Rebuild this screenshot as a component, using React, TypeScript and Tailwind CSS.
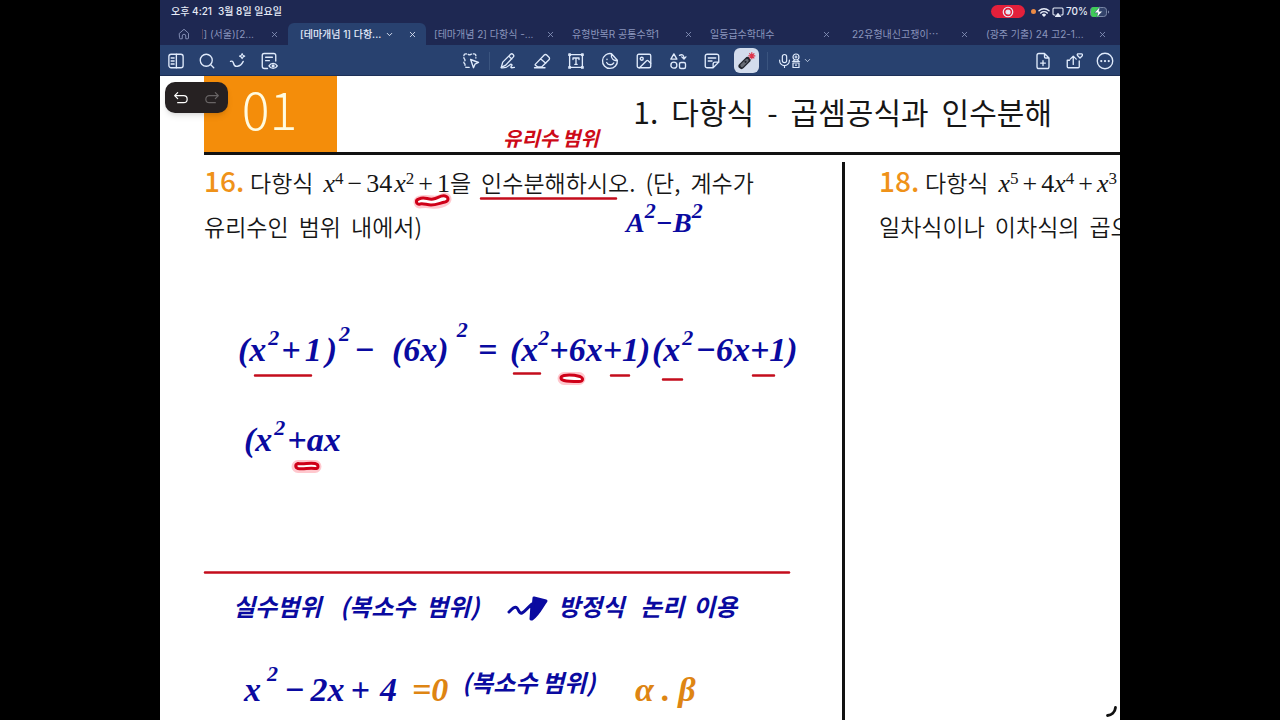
import React from "react";
import { Search, X, ChevronDown, Image as ImageIcon } from "lucide-react";

type IconProps = { children: React.ReactNode; className?: string; width?: number };

function Icon({ children, className = "size-[18px]", width = 1.8 }: IconProps) {
  return (
    <svg viewBox="0 0 24 24" className={className} fill="none" stroke="currentColor" strokeWidth={width} strokeLinecap="round" strokeLinejoin="round" aria-hidden="true">
      {children}
    </svg>
  );
}

function ToolButton({ label, children, className = "w-[34px]" }: { label: string; children: React.ReactNode; className?: string }) {
  return (
    <button type="button" aria-label={label} className={`flex h-[26px] items-center justify-center ${className}`}>
      {children}
    </button>
  );
}

function StatusBar() {
  return (
    <div className="flex h-[23px] items-center justify-between pr-[10px] pl-[11px] text-[10px] font-medium text-[#e6ebf7]">
      <div className="flex gap-1.5">
        <span>오후 4:21</span>
        <span>3월 8일 일요일</span>
      </div>
      <div className="flex items-center gap-0.5">
        <span className="mr-1 flex h-[13px] w-[34px] items-center justify-center rounded-full bg-[#e3203b]">
          <Icon className="size-3" width={2.4}>
            <circle cx="12" cy="12" r="9.5" />
            <circle cx="12" cy="12" r="4" fill="currentColor" />
          </Icon>
        </span>
        <span className="size-[5px] rounded-full bg-[#ec8a45]" />
        <Icon className="size-3" width={3}>
          <path d="M2 9.5a15 15 0 0 1 20 0M5.5 14a9.5 9.5 0 0 1 13 0" />
          <path d="M9.5 17.5a4 4 0 0 1 5 0L12 20z" fill="currentColor" />
        </Icon>
        <Icon className="size-3" width={2.2}>
          <path d="M6 18H4a2 2 0 0 1-2-2V6a2 2 0 0 1 2-2h16a2 2 0 0 1 2 2v10a2 2 0 0 1-2 2h-2" />
          <path d="m12 15 5 6H7z" fill="currentColor" />
        </Icon>
        <span>70%</span>
        <svg viewBox="0 0 20 12" className="h-3 w-5" aria-hidden="true">
          <rect x="0.5" y="1.5" width="16" height="9" rx="2.8" fill="#33436b" stroke="#7986a6" />
          <path d="M3.3 1h5.7v10H3.3A2.6 2.6 0 0 1 1 8.400V3.600A2.600 2.600 0 0 1 3.300 1z" fill="#3ecb57" />
          <path d="M18 4.500v3c.8-.3 1.200-.8 1.200-1.500S18.800 4.800 18 4.500z" fill="#7986a6" />
          <path d="M10 .5 4.500 6.800h3.300L6.800 11.500l5.700-6.300H9z" fill="#fff" stroke="#24406b" strokeWidth=".5" />
        </svg>
      </div>
    </div>
  );
}

const tabs = [
  { title: "[테마개념 2] 다항식 -...", pad: "pl-2" },
  { title: "유형반복R 공통수학1", pad: "pl-2" },
  { title: "일등급수학대수", pad: "pl-2" },
  { title: "22유형내신고쟁이⋯", pad: "pl-3" },
  { title: "(광주 기출) 24 고2-1...", pad: "pl-2" },
];

function CloseButton({ title }: { title: string }) {
  return (
    <button type="button" aria-label={`${title} 닫기`} className="flex size-4 shrink-0 items-center justify-center">
      <X className="size-[9px]" strokeWidth={2.2} />
    </button>
  );
}

function TabBar() {
  return (
    <nav className="flex h-[22px] pr-1 text-[10px] text-[#8b96bd]">
      <div className="flex w-32 shrink-0 items-center pr-1.5 pl-[18px]">
        <button type="button" aria-label="홈">
          <Icon className="size-3">
            <path d="M3 10.500 12 2.500l9 8V20a1.500 1.500 0 0 1-1.500 1.500h-4V16a3.500 3.500 0 0 0-7 0v5.500h-4A1.500 1.500 0 0 1 3 20z" />
          </Icon>
        </button>
        <div className="ml-3 flex w-[52px] justify-end overflow-hidden whitespace-nowrap">
          <a href="#seoul">념] (서울)[2...</a>
        </div>
        <span className="grow" />
        <CloseButton title="(서울)" />
      </div>
      <div className="grid grow grid-cols-6">
        <div className="flex items-center rounded-t-md bg-[#28416f] pr-1.5 pl-3 font-medium text-[#e3eafa]">
          <a href="#concept1" aria-current="page" className="whitespace-nowrap">[테마개념 1] 다항...</a>
          <span className="grow" />
          <button type="button" aria-label="탭 메뉴" className="mr-2.5">
            <ChevronDown className="size-[9px]" strokeWidth={2.5} />
          </button>
          <CloseButton title="테마개념 1" />
        </div>
        {tabs.map((t) => (
          <div key={t.title} className={`flex items-center justify-between pr-1.5 ${t.pad}`}>
            <a href="#tab" className="whitespace-nowrap">{t.title}</a>
            <CloseButton title={t.title} />
          </div>
        ))}
      </div>
    </nav>
  );
}

function Toolbar() {
  return (
    <div className="grid h-[31px] grid-cols-[1fr_auto_1fr] items-center border-b border-[#1d3057] bg-[#28416f] pt-px text-[#dfeafb]">
      <div className="flex">
        <ToolButton label="사이드바" className="w-[31px]">
          <Icon>
            <rect x="2.500" y="3" width="19" height="18" rx="3" />
            <path d="M12.500 3v18M5.500 8h4M5.500 12h4M5.500 16h4" />
          </Icon>
        </ToolButton>
        <ToolButton label="검색" className="w-[31px]">
          <Search className="size-[18px]" strokeWidth={1.8} />
        </ToolButton>
        <ToolButton label="AI 도구" className="w-[31px]">
          <Icon>
            <path d="M2 12.500c2-1 3.500 0 4 2.500s2.500 4.500 5.500 4c3.500-.5 6-3.500 7.500-6.500" />
            <path d="M17.500 2c.4 2.300 1.200 3.100 3.500 3.500-2.300.4-3.100 1.200-3.500 3.500-.4-2.300-1.200-3.100-3.500-3.500 2.300-.4 3.100-1.200 3.500-3.500z" strokeWidth="1.500" />
          </Icon>
        </ToolButton>
        <ToolButton label="문서 보기" className="w-[31px]">
          <Icon>
            <path d="M10 22H6a3 3 0 0 1-3-3V4.500A2.500 2.500 0 0 1 5.500 2h13A2.500 2.500 0 0 1 21 4.500V12M7.500 7h9M7.500 11.500h5" />
            <path d="M12 18.500c2.500-4.500 8.500-4.500 11 0-2.500 4.500-8.500 4.500-11 0z" />
            <circle cx="17.500" cy="18.500" r="1.200" fill="currentColor" />
          </Icon>
        </ToolButton>
      </div>

      <div className="flex items-center pr-3.5">
        <ToolButton label="선택">
          <Icon>
            <path d="M9.500 20.500H6a2 2 0 0 1-2-2v-2c0-1-1.500-1.200-1.500-2.500S4 12.500 4 11s-1.500-2-1.500-3.500V5a2.500 2.500 0 0 1 2.500-2.500h1.500c1.500 0 2 1.300 3.500 1.300s2-1.300 4-1.300h2A2.500 2.500 0 0 1 18.500 5v3" strokeDasharray="4.500 2.500" />
            <path d="m11.500 10 10.500 4-4.700 2.200-2 4.800z" />
          </Icon>
        </ToolButton>
        <span className="mx-px h-[18px] w-px bg-[#3a547f]" />
        <ToolButton label="펜">
          <Icon>
            <path d="m3 20.500 2-7L15.500 3c2-1.800 5.500 1.200 3.700 3.500L9 17.500zM13 5.500l4 3.800" />
            <path d="M3 21c5 .5 8-.5 11-3.500 2.500-2.500 4.500-.5 2.500 1.500-1.500 2-.5 2.500 4 1.500" />
          </Icon>
        </ToolButton>
        <ToolButton label="지우개">
          <Icon>
            <path d="M3 16.500 15 4a2.300 2.300 0 0 1 3.300 0l3 3a2.300 2.300 0 0 1 0 3.300L11.500 20H6.500L3 17.500a.8.8 0 0 1 0-1zM10 9l7 6M2 21h14" />
          </Icon>
        </ToolButton>
        <ToolButton label="텍스트">
          <Icon>
            <path d="M3.500 5v14M20.500 5v14M5 3.500h14M5 20.500h14" />
            <path d="M2.500 2.500h2v2h-2zM19.500 2.500h2v2h-2zM2.500 19.500h2v2h-2zM19.500 19.500h2v2h-2z" />
            <path d="M8 10V8h8v2M12 8v8.500M10.500 16.500h3" />
          </Icon>
        </ToolButton>
        <ToolButton label="스티커">
          <Icon>
            <path d="M14 2.300A9.900 9.900 0 1 0 21.800 11M14 2.300 21.800 11c-5 1.500-9-2.500-7.800-8.700z" />
            <path d="M7.500 14c2 4 7.500 4 9.500.5M8 9.500v.5" />
          </Icon>
        </ToolButton>
        <ToolButton label="이미지">
          <ImageIcon className="size-[18px]" strokeWidth={1.8} />
        </ToolButton>
        <ToolButton label="도형">
          <Icon>
            <path d="m6.500 2.500 4 7h-8z" />
            <circle cx="6.500" cy="17.500" r="4" />
            <rect x="14" y="14" width="8" height="8" rx="2" />
            <path d="M14 4.500c3.500-2 6-.5 6 4M17 6.500l3 3 2.500-3" />
          </Icon>
        </ToolButton>
        <ToolButton label="메모">
          <Icon>
            <path d="M21 13.500V5.500A2.500 2.500 0 0 0 18.500 3h-13A2.500 2.500 0 0 0 3 5.500v13A2.500 2.500 0 0 0 5.500 21h8zM13.500 21v-5a2.500 2.500 0 0 1 2.500-2.500h5M7 8h10M7 12h5" />
          </Icon>
        </ToolButton>
        <ToolButton label="레이저 포인터">
          <span className="flex size-[25px] items-center justify-center rounded-md bg-[#d3dcec]">
            <svg viewBox="0 0 25 25" className="size-[25px]" aria-hidden="true">
              <path d="m7.500 18 6-6" stroke="#20242c" strokeWidth="6" strokeLinecap="round" />
              <path d="m8 17.500 5-5" stroke="#666b74" strokeWidth="3.200" strokeLinecap="round" />
              <circle cx="11.500" cy="13.800" r="1.100" fill="#20242c" />
              <path d="M17.800 4.300v7M14.300 7.800h7M15.300 5.300l5 5M20.300 5.300l-5 5" stroke="#dc3349" strokeWidth="1.200" />
            </svg>
          </span>
        </ToolButton>
        <span className="mx-1 h-[18px] w-px bg-[#3a547f]" />
        <button type="button" aria-label="녹음" className="flex h-[26px] items-center pl-1.5">
          <Icon className="h-4 w-[13px]" width={2.200}>
            <rect x="8" y="0" width="8" height="15" rx="4" />
            <path d="M3 10.500v1a9 9 0 0 0 18 0v-1M12 20.500v3.500" />
          </Icon>
          <svg viewBox="0 0 10 16" className="h-4 w-2.5" fill="none" stroke="currentColor" strokeWidth="1.200" aria-hidden="true">
            <circle cx="5" cy="4" r="3" />
            <path d="M5 2.500v3M3.500 4h3M3.500 7 2 8.500h6L6.500 7M2 10h6v4.500H2zM4 12.200h2" />
          </svg>
          <ChevronDown className="ml-0.5 size-[9px]" strokeWidth={2} />
        </button>
      </div>

      <div className="flex justify-end">
        <ToolButton label="페이지 추가" className="w-[31px]">
          <Icon>
            <path d="M14 2H6.500A2.500 2.500 0 0 0 4 4.500v15A2.500 2.500 0 0 0 6.500 22h11a2.500 2.500 0 0 0 2.500-2.500V8zM14 2v4.500A1.500 1.500 0 0 0 15.500 8H20M12 11.500v6.500M8.800 14.800h6.400" />
          </Icon>
        </ToolButton>
        <ToolButton label="공유" className="w-[31px]">
          <Icon>
            <path d="M6 11H3v8.500A1.500 1.500 0 0 0 4.500 21h13a1.500 1.500 0 0 0 1.500-1.500V12M11 16.500V6M7 9.500 11 5.500l4 4" />
            <path d="M17 2.500h5a1.500 1.500 0 0 1 1 2.500l-3 3.200L17 5a1.500 1.500 0 0 1 0-2.500z" />
          </Icon>
        </ToolButton>
        <ToolButton label="더보기" className="w-[31px]">
          <Icon>
            <circle cx="12" cy="12" r="10.300" />
            <path d="M7 12h.01M12 12h.01M17 12h.01" strokeWidth="3" />
          </Icon>
        </ToolButton>
      </div>
    </div>
  );
}

const mathFont = "font-['Liberation_Serif','Noto_Sans_CJK_KR',serif]";

function Pow({ base = "x", exp }: { base?: string; exp: string }) {
  return (
    <span>
      <i>{base}</i>
      <sup className="relative -top-2 align-baseline text-[17px] leading-none">{exp}</sup>
    </span>
  );
}

function Page() {
  return (
    <article className="pl-11 text-[#161616]">
      <header className="flex h-[79px] items-stretch justify-between border-b-[3px] border-[#111]">
        <div className="flex w-[133px] items-center justify-center bg-[#f48d0a] pr-0.5 pb-3 text-[52px] leading-[64px] font-light text-[#fffbe0]">01</div>
        <h1 className="flex items-center gap-[13px] pr-[68px] pb-1.5 text-[30px] whitespace-nowrap">
          <span>1.</span>
          <span>다항식</span>
          <span>-</span>
          <span>곱셈공식과</span>
          <span>인수분해</span>
        </h1>
      </header>
      <div className="flex text-[23px] leading-[46px] font-[350] whitespace-nowrap">
        <section className="w-[638px] shrink-0 pt-0.5">
          <p className="flex h-[46px] items-baseline gap-2.5">
            <span className="-mr-2.5 w-[46px] text-[28px] font-medium text-[#ef9219]">16.</span>
            <span>다항식</span>
            <span className="flex items-baseline">
              <span className={`flex gap-1 text-[26px] font-normal ${mathFont}`}>
                <Pow exp="4" />
                <span>−</span>
                <span className="-mr-0.5">34</span>
                <Pow exp="2" />
                <span>+</span>
                <span>1</span>
              </span>
              <span>을</span>
            </span>
            <span>인수분해하시오.</span>
            <span>(단,</span>
            <span>계수가</span>
          </p>
          <p className="flex gap-2.5">
            <span>유리수인</span>
            <span>범위</span>
            <span>내에서)</span>
          </p>
        </section>
        <section className="mt-[7px] h-[560px] min-w-0 flex-1 border-l-[3px] border-[#111] pl-[34px]">
          <div className="-mt-[5px]">
            <p className="flex h-[46px] items-baseline gap-2.5">
              <span className="-mr-2.5 w-[46px] shrink-0 text-[28px] font-medium text-[#ef9219]">18.</span>
              <span>다항식</span>
              <span className={`flex gap-1 text-[26px] font-normal ${mathFont}`}>
                <Pow exp="5" />
                <span>+</span>
                <span>4<Pow exp="4" /></span>
                <span>+</span>
                <Pow exp="3" />
              </span>
            </p>
            <p className="flex gap-2.5">
              <span>일차식이나</span>
              <span>이차식의</span>
              <span>곱으</span>
            </p>
          </div>
        </section>
      </div>
    </article>
  );
}

function Ink({ at, children }: { at: string; children: React.ReactNode }) {
  return <span className={`absolute flex leading-10 whitespace-nowrap italic ${at}`}>{children}</span>;
}

function Sq({ lift = "-top-3" }: { lift?: string }) {
  return <span className={`relative text-[22px] ${lift}`}>2</span>;
}

const blue = "text-[#0a0aa0]";
const math = `${mathFont} text-[34px] font-bold`;
const hand = "text-[24px] font-bold";

function Annotations() {
  return (
    <div className="pointer-events-none absolute inset-0">
      <Ink at="left-[343px] top-[42px] text-[20px] font-bold text-[#cd0a18]">유리수</Ink>
      <Ink at="left-[402px] top-[42px] text-[20px] font-bold text-[#cd0a18]">범위</Ink>
      <Ink at={`left-[466px] top-[127px] text-[28px] font-bold ${mathFont} ${blue}`}>A<Sq />−</Ink>
      <Ink at={`left-[513px] top-[127px] text-[28px] font-bold ${mathFont} ${blue}`}>B<Sq /></Ink>

      <Ink at={`left-[78px] top-[254px] gap-0.5 ${math} ${blue}`}>(x<Sq />+<span className="px-0.5">1</span>)<Sq lift="-top-4" /></Ink>
      <Ink at={`left-[194px] top-[254px] ${math} ${blue}`}>−</Ink>
      <Ink at={`left-[232px] top-[254px] gap-2 ${math} ${blue}`}>(6x)<Sq lift="-top-5" /></Ink>
      <Ink at={`left-[318px] top-[254px] ${math} ${blue}`}>=</Ink>
      <Ink at={`left-[350px] top-[254px] ${math} ${blue}`}>(x<Sq />+6x+1)</Ink>
      <Ink at={`left-[492px] top-[254px] gap-0.5 ${math} ${blue}`}>(x<Sq />−6x+1)</Ink>

      <Ink at={`left-[84px] top-[344px] gap-0.5 ${math} ${blue}`}>(x<Sq />+ax</Ink>

      <Ink at={`left-[73px] top-[510px] ${hand} ${blue}`}>실수범위</Ink>
      <Ink at={`left-[180px] top-[510px] ${hand} ${blue}`}>(복소수</Ink>
      <Ink at={`left-[266px] top-[510px] ${hand} ${blue}`}>범위)</Ink>
      <Ink at={`left-[398px] top-[510px] ${hand} ${blue}`}>방정식</Ink>
      <Ink at={`left-[480px] top-[510px] ${hand} ${blue}`}>논리</Ink>
      <Ink at={`left-[533px] top-[510px] ${hand} ${blue}`}>이용</Ink>

      <Ink at={`left-[84px] top-[594px] gap-1.5 ${math} ${blue}`}>
        <span>x</span>
        <Sq lift="-top-4" />
        <span>−</span>
        <span>2x</span>
        <span>+</span>
        <span className="px-1">4</span>
      </Ink>
      <Ink at={`left-[252px] top-[594px] ${math} text-[#de8513]`}>=0</Ink>
      <Ink at={`left-[302px] top-[586px] ${hand} ${blue}`}>(복소수</Ink>
      <Ink at={`left-[382px] top-[586px] ${hand} ${blue}`}>범위)</Ink>
      <Ink at={`left-[475px] top-[594px] gap-2 ${math} text-[#de8513]`}>
        <span>α</span>
        <span>.</span>
        <span>β</span>
      </Ink>

      <svg viewBox="160 76 960 644" className="absolute top-0 left-0 h-[644px] w-[960px]" fill="none" strokeLinecap="round" strokeLinejoin="round" aria-hidden="true">
        <g stroke="#c40d1c" strokeWidth="2.500">
          <path d="M481 198.500h135M255 375.500h56M514 373.500h26M611 375.500h18M663 379.500h19M753 375.500h21" />
          <path d="M205 572.500h584" />
        </g>
        <g stroke="#ff3850" strokeOpacity=".28" strokeWidth="13">
          <path d="M420 202q5-1 12 0t13-3M564 378.500h15M298 466.500h17" />
        </g>
        <g stroke="#cf0018" strokeWidth="3" fill="#fff">
          <path d="M419 199c5-3 9 1 14 0s8-4 12-3c4 1 4 5 0 6-5 1-9 3-14 3-4 0-8-2-11-1-4 1-5-4-1-5z" />
          <path d="M564 375.500c6-1 12 0 16 1 4 2 3 5-1 5-6 0-11 0-15-1-4-1-4-4 0-5z" />
          <path d="M298 463.500c6 1 11-1 17 0 4 1 4 5 0 5-6-1-11 1-17 0-3-1-3-4 0-5z" />
        </g>
        <g stroke="#0a0aa0" strokeWidth="3">
          <path d="M509 612c4-4 6-6 8-4s2 6 5 5 6-6 10-9l-1 15" />
          <path d="m534 598 12 3c-4 5-7 13-14 18z" fill="#0a0aa0" />
        </g>
        <path d="M1107.500 715.500c4-.3 7.500-3 8-8" stroke="#111" strokeWidth="2.800" />
      </svg>
    </div>
  );
}

export default function App() {
  return (
    <div className="h-screen overflow-hidden bg-black font-['Inter','Noto_Sans_CJK_KR',sans-serif]">
      <div className="mx-auto flex h-full w-3/4 flex-col bg-[#1e2852]">
        <StatusBar />
        <TabBar />
        <Toolbar />
        <main className="relative min-h-0 flex-1 overflow-hidden bg-white font-['Noto_Sans_CJK_KR',sans-serif]">
          <Page />
          <Annotations />
          <div className="absolute top-[6px] left-[5px] flex h-[31px] w-[63px] items-center justify-around rounded-[10px] bg-[#262122] text-white shadow-md">
            <button type="button" aria-label="실행 취소">
              <Icon className="size-4">
                <path d="M7 4 2.500 8.500 7 13M2.500 8.500H16a5 5 0 0 1 0 10.500H7" />
              </Icon>
            </button>
            <button type="button" aria-label="다시 실행" className="text-[#686465]">
              <Icon className="size-4">
                <path d="m17 4 4.500 4.500L17 13M21.500 8.500H8A5 5 0 0 0 8 19h9" />
              </Icon>
            </button>
          </div>
        </main>
      </div>
    </div>
  );
}
